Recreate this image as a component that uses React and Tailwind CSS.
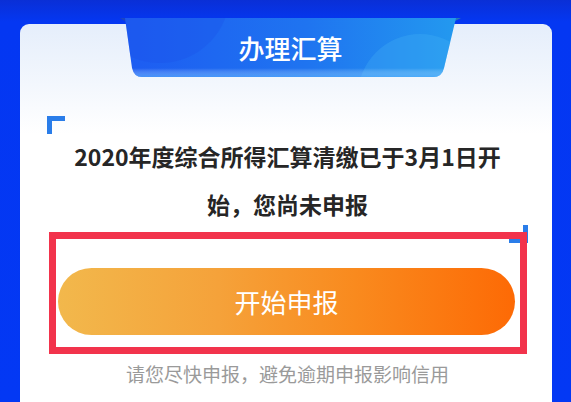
import React from "react";

function Tab() {
  const body = "M5 0 L336 0 L324 50 Q322 59 313 59 L22 59 Q14 59 12 50 Z";
  return (
    <div className="absolute left-[100px] top-[-6px] w-[341px] h-[59px]">
      <svg width="341" height="59" viewBox="0 0 341 59" className="absolute inset-0">
        <defs>
          <linearGradient id="tabg" x1="0" y1="0" x2="1" y2="0">
            <stop offset="0" stopColor="#1d5cf2" />
            <stop offset="0.55" stopColor="#1f74f0" />
            <stop offset="1" stopColor="#2399ef" />
          </linearGradient>
          <linearGradient id="tabb" x1="0" y1="0" x2="0" y2="1">
            <stop offset="0.85" stopColor="#ffffff" stopOpacity="0" />
            <stop offset="1" stopColor="#5cb4ff" stopOpacity="0.6" />
          </linearGradient>
          <clipPath id="tabclip">
            <path d={body} />
          </clipPath>
        </defs>
        <path d="M0 0 L7 0 L9 6 L0 0 Z" fill="#1a44c4" />
        <path d="M341 0 L332 0 L329 6 L341 0 Z" fill="#2478b8" />
        <path d={body} fill="url(#tabg)" />
        <g clipPath="url(#tabclip)">
          <circle cx="300" cy="78" r="62" fill="#46b4f6" opacity="0.3" />
          <circle cx="40" cy="-25" r="70" fill="#1a4fe8" opacity="0.3" />
          <rect x="0" y="0" width="341" height="59" fill="url(#tabb)" />
        </g>
      </svg>
      <div className="relative flex h-[59px] items-start justify-center pt-[13px] text-[26px] leading-[34px] text-white font-medium">
        办理汇算
      </div>
    </div>
  );
}

export default function App() {
  return (
    <div
      className="w-[571px] h-[402px] overflow-hidden pt-[24px] pl-[20px] pr-[19px] bg-[linear-gradient(180deg,#0a2fd6_0px,#0437f2_22px,#0338f4_100%)]"
      style={{ fontFamily: '"Noto Sans CJK SC", "Noto Sans", sans-serif' }}
    >
      <div className="relative h-[378px] rounded-t-[9px] bg-[linear-gradient(180deg,#e5eefb_0px,#f3f7fd_60px,#ffffff_110px)] pt-[92px]">
        <Tab />
        <div className="relative ml-[27px] mr-[24px]">
          <div className="absolute left-0 top-0 w-[18px] h-[18px] border-l-[5px] border-t-[5px] border-[#2a7de9]" />
          <div className="absolute right-0 top-[109px] w-[19px] h-[18px] border-r-[5px] border-b-[4px] border-[#2a7de9]" />
          <div className="pt-[16px] text-center text-[23px] leading-[48px] font-bold text-[#262626]">
            <div>2020年度综合所得汇算清缴已于3月1日开</div>
            <div>始，您尚未申报</div>
          </div>
          <div className="relative mt-[4px] ml-[2px] mr-[1px] h-[122px] border-[7px] border-[#f2334c] pt-[29px] pl-[2px] pr-[5px]">
            <div className="flex h-[67px] items-center justify-center rounded-full bg-[linear-gradient(90deg,#f2b84c_0%,#f5a23a_35%,#f98a1e_65%,#fd6a05_100%)] text-[26px] text-white">
              开始申报
            </div>
          </div>
          <div className="mt-[7px] text-center text-[19px] leading-[26px] text-[#9a9a9a]">
            请您尽快申报，避免逾期申报影响信用
          </div>
        </div>
      </div>
    </div>
  );
}
